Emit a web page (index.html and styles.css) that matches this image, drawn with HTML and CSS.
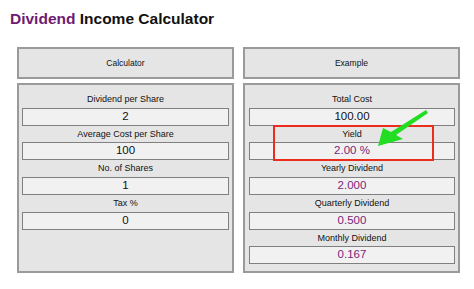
FILE: index.html
```html
<!DOCTYPE html>
<html>
    <head>
        <title>Dividend Income Calculator</title>
        <link rel="stylesheet" href="styles.css">
    </head>
    <body>
        <h1><span class="brand">Dividend</span> Income Calculator</h1>
        <div class="columns">
            <div class="column">
                <div class="head">Calculator</div>
                <div class="panel">
                    <div class="label">Dividend per Share</div>
                    <div class="field">2</div>
                    <div class="label">Average Cost per Share</div>
                    <div class="field">100</div>
                    <div class="label">No. of Shares</div>
                    <div class="field">1</div>
                    <div class="label">Tax %</div>
                    <div class="field">0</div>
                </div>
            </div>
            <div class="column right">
                <div class="head">Example</div>
                <div class="panel">
                    <div class="label">Total Cost</div>
                    <div class="field">100.00</div>
                    <div class="label">Yield</div>
                    <div class="field result">2.00 %</div>
                    <div class="label">Yearly Dividend</div>
                    <div class="field result">2.000</div>
                    <div class="label">Quarterly Dividend</div>
                    <div class="field result">0.500</div>
                    <div class="label">Monthly Dividend</div>
                    <div class="field result">0.167</div>
                </div>
            </div>
        </div>

        <!-- annotation over the yield row -->
        <div class="highlight"></div>
        <svg class="arrow" width="60" height="50" viewBox="0 0 60 50">
            <path d="M56 6 L58 9 L26 31 L33 35 L8 42 L13 24 L21 28 Z" fill="#22dd22"/>
        </svg>
    </body>
</html>
```

FILE: styles.css
```css
body{
    font-family: "Liberation Sans", Arial, sans-serif;
    margin: 0;
    padding: 0;
    background: #fff;
    color: #111;
    position: relative;
    width: 474px;
    height: 289px;
    overflow: hidden;
}
h1{
    font-size: 15.5px;
    font-weight: bold;
    margin: 0;
    padding: 10px 0 0 10px;
    height: 47px;
    box-sizing: border-box;
    line-height: 18px;
}
.brand{
    color: #6d1b72;
}

.columns{
    display: flex;
    gap: 9px;
    padding-left: 17px;
}
.column{
    width: 217px;
    display: flex;
    flex-direction: column;
    gap: 4px;
}
.head, .panel{
    background: #e5e5e5;
    border: 2px solid #9a9a9a;
    box-sizing: border-box;
}
.head{
    height: 32px;
    font-size: 8.5px;
    display: flex;
    justify-content: center;
    align-items: center;
}
.panel{
    height: 190px;
    padding: 6px 3px 0 3px;
}
.right .panel{
    padding: 6px 3px 0 4px;
}
.label{
    font-size: 9px;
    height: 16.7px;
    line-height: 16.7px;
    text-align: center;
}
.field{
    height: 18px;
    box-sizing: border-box;
    border: 1.5px solid #808080;
    background: #f1f1f1;
    font-size: 11.5px;
    line-height: 15px;
    text-align: center;
}
.result{
    color: #7a1f7c;
}

.highlight{
    position: absolute;
    left: 273px;
    top: 125px;
    width: 161px;
    height: 36px;
    box-sizing: border-box;
    border: 2px solid #ea2d1c;
}
.arrow{
    position: absolute;
    left: 370px;
    top: 104px;
}
```
